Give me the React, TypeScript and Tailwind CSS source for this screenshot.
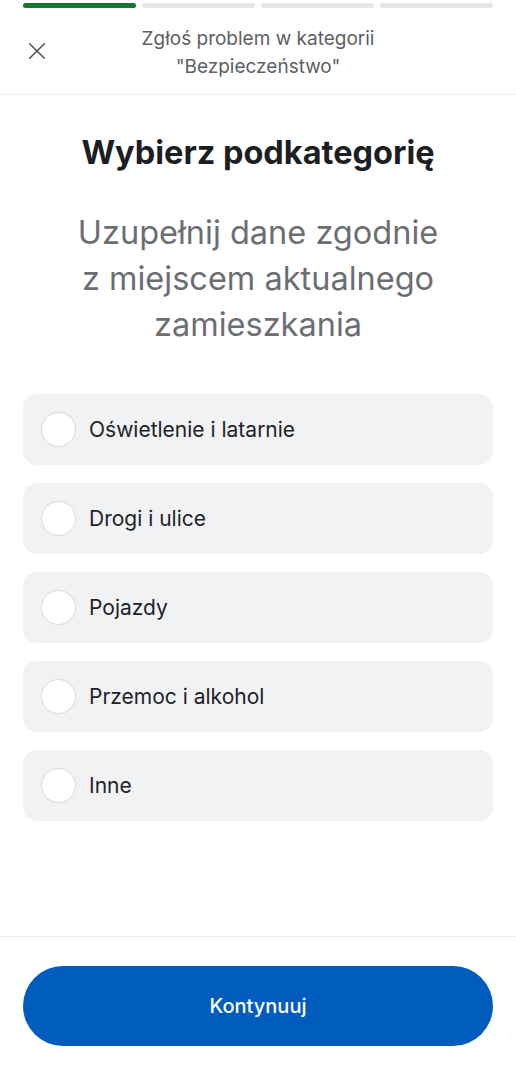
import { useState } from 'react'

const options = ['Oświetlenie i latarnie', 'Drogi i ulice', 'Pojazdy', 'Przemoc i alkohol', 'Inne']

export default function App() {
  const [selected, setSelected] = useState<number | null>(null)

  return (
    <div className="w-[516px] h-[1080px] bg-white flex flex-col" style={{ fontFamily: 'Inter, "Noto Sans", sans-serif' }}>
      <div className="flex gap-[6px] px-[23px] pt-[3px]">
        <div className="flex-1 h-[5px] rounded-full bg-[#13792b]" />
        <div className="flex-1 h-[5px] rounded-full bg-[#e6e6e6]" />
        <div className="flex-1 h-[5px] rounded-full bg-[#e6e6e6]" />
        <div className="flex-1 h-[5px] rounded-full bg-[#e6e6e6]" />
      </div>

      <div className="relative h-[87px] border-b border-[#ececec] flex items-center justify-center">
        <button className="absolute left-[26px] top-[32px] text-[#4a4d52]">
          <svg width="22" height="22" viewBox="0 0 24 24" fill="none" stroke="currentColor" strokeWidth="1.6" strokeLinecap="round">
            <path d="M4 4L20 20M20 4L4 20" />
          </svg>
        </button>
        <div className="text-center text-[19px] leading-[28px] text-[#5c5f63] pt-[4px]">
          <div>Zgłoś problem w kategorii</div>
          <div>"Bezpieczeństwo"</div>
        </div>
      </div>

      <div className="flex-1 flex flex-col px-[23px]">
        <h1 className="text-center text-[32.5px] font-bold text-[#1b1f24] mt-[38px] leading-[40px]">Wybierz podkategorię</h1>
        <p className="text-center text-[32.5px] leading-[46px] text-[#6b6e73] mt-[37px]">
          Uzupełnij dane zgodnie
          <br />
          z miejscem aktualnego
          <br />
          zamieszkania
        </p>

        <div className="flex flex-col gap-[18px] mt-[46px]">
          {options.map((o, i) => (
            <button
              key={o}
              onClick={() => setSelected(i)}
              className="h-[71px] rounded-[14px] bg-[#f1f2f4] flex items-center gap-[13px] px-[18px] text-left"
            >
              <span className="w-[35px] h-[35px] rounded-full bg-white border border-[#d6d8db] flex items-center justify-center">
                {selected === i && <span className="w-[17px] h-[17px] rounded-full bg-[#005cbd]" />}
              </span>
              <span className="text-[21px] text-[#1f2328]">{o}</span>
            </button>
          ))}
        </div>
      </div>

      <div className="border-t border-[#ececec] px-[23px] pt-[29px] pb-[34px]">
        <button className="w-full h-[80px] rounded-full bg-[#005cbd] text-white text-[20px] font-medium">Kontynuuj</button>
      </div>
    </div>
  )
}
